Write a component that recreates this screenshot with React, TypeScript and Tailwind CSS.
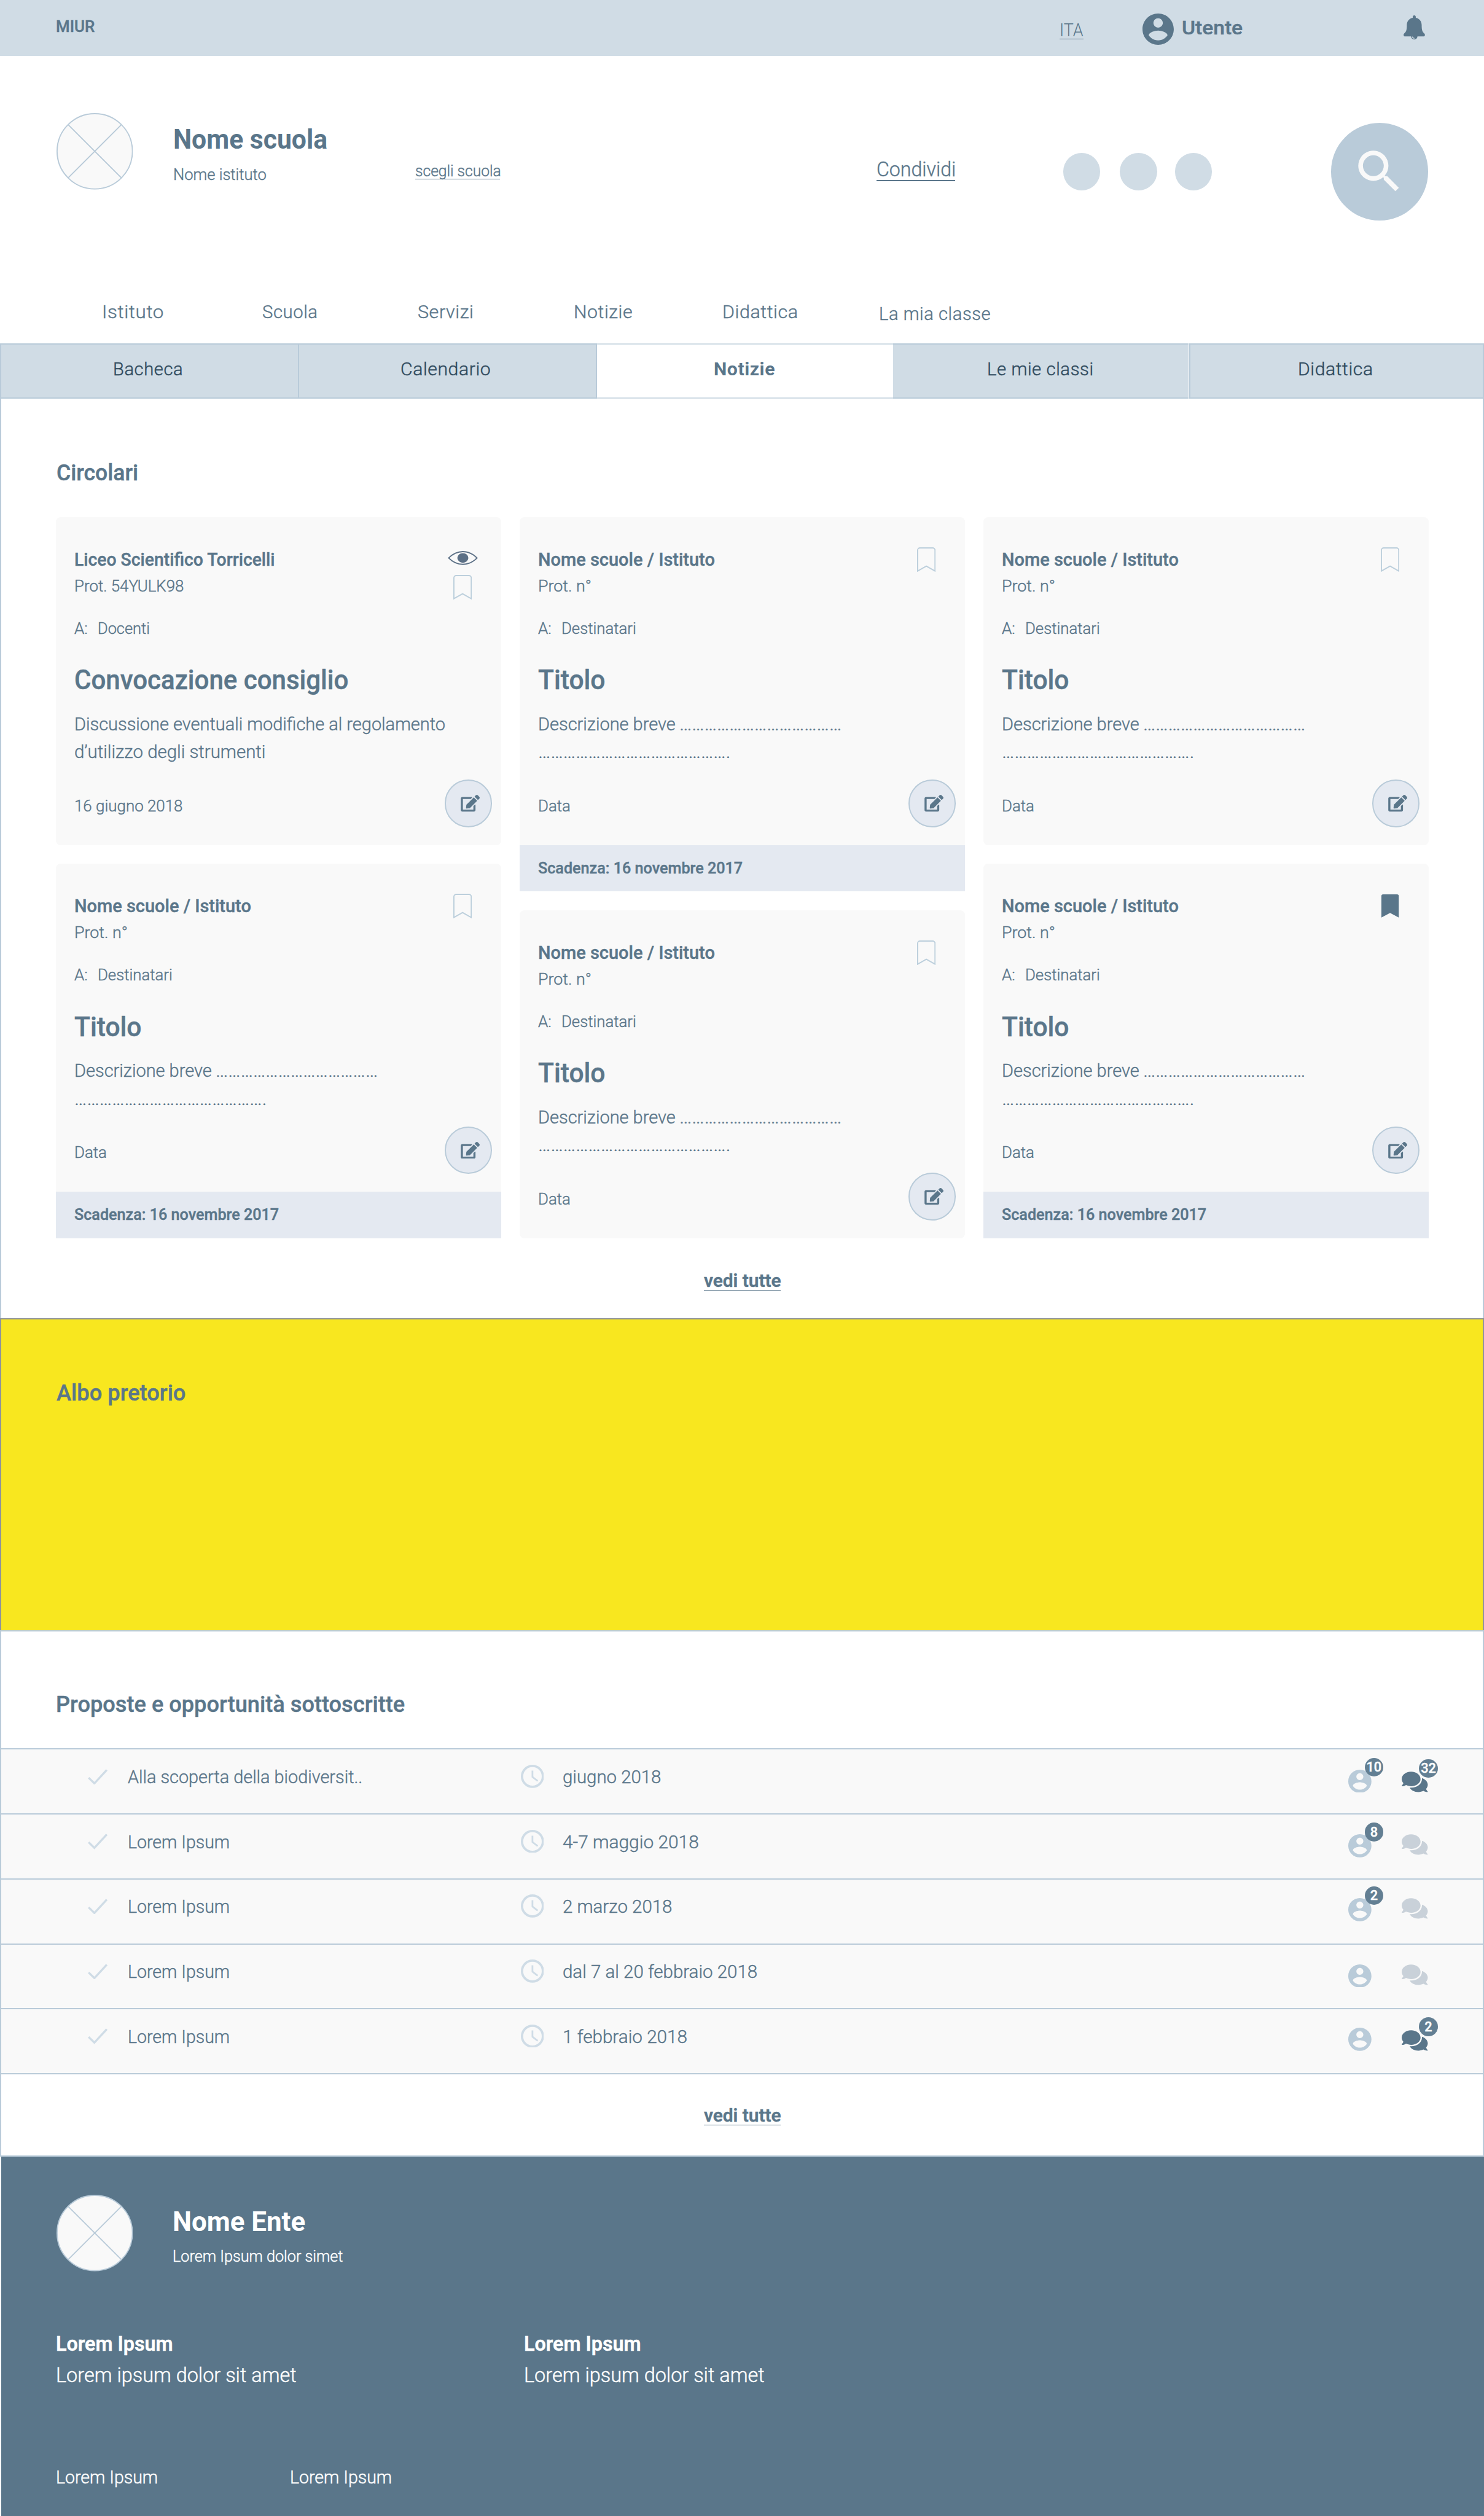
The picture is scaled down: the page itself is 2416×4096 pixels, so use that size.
import { useLayoutEffect, useRef, useState } from "react";
import type { ReactNode } from "react";
import { FaComments, FaEdit } from "react-icons/fa";

/** One line of text, condensed or widened to occupy `w` pixels. */
function Fit({ w, children, className = "" }: { w: number; children: ReactNode; className?: string }) {
  const outer = useRef<HTMLSpanElement>(null);
  const inner = useRef<HTMLSpanElement>(null);
  const [scale, setScale] = useState(1);
  useLayoutEffect(() => {
    if (!outer.current || !inner.current || scale !== 1) return;
    const target = outer.current.getBoundingClientRect().width;
    const natural = inner.current.getBoundingClientRect().width;
    if (natural > 0) setScale(target / natural);
  }, [scale]);
  return (
    <span ref={outer} className={`block whitespace-nowrap ${className}`} style={{ width: w }}>
      <span ref={inner} className="inline-block origin-left align-top" style={{ transform: `scaleX(${scale})` }}>
        {children}
      </span>
    </span>
  );
}

function Account({ className }: { className: string }) {
  return (
    <svg viewBox="2 2 20 20" className={className} fill="currentColor">
      <path d="M12 2C6.48 2 2 6.48 2 12s4.48 10 10 10 10-4.48 10-10S17.52 2 12 2zm0 3c1.66 0 3 1.34 3 3s-1.34 3-3 3-3-1.34-3-3 1.34-3 3-3zm0 14.2c-2.5 0-4.71-1.28-6-3.22.03-1.99 4-3.08 6-3.08 1.99 0 5.97 1.09 6 3.08-1.29 1.94-3.5 3.22-6 3.22z" />
    </svg>
  );
}

function Bell() {
  return (
    <svg viewBox="0 0 112 128" className="mt-[27px] h-[42px] w-[37px]">
      <path
        fill="#5a768a"
        d="M56 0c5 0 8 3 8 8v5c20 3 31 20 31 38 0 28 4 36 14 44 3 3 3 6 3 8 0 5-3 8-8 8H8c-5 0-8-3-8-8 0-2 0-5 3-8 10-8 14-16 14-44 0-18 11-35 31-38V8c0-5 3-8 8-8z"
      />
      <path fill="#5a768a" d="M39 110h34a17 17 0 0 1-34 0z" />
      <path fill="none" stroke="#d0dce5" strokeWidth="4" d="M46 112c1 5 5 9 11 9" />
    </svg>
  );
}

function Placeholder() {
  return (
    <svg viewBox="0 0 132 132" className="size-[132px]" fill="none" stroke="#b9cbd9" strokeWidth="2">
      <circle cx="66" cy="66" r="65" fill="#f9f9f9" />
      <path d="M20 20l92 92M112 20l-92 92" />
    </svg>
  );
}

function SearchGlyph() {
  return (
    <svg viewBox="0 0 24 24" className="size-24" fill="#f9f9f9">
      <path d="M15.5 14h-.79l-.28-.27C15.41 12.59 16 11.11 16 9.5 16 5.91 13.09 3 9.5 3S3 5.91 3 9.5 5.91 16 9.5 16c1.61 0 3.09-.59 4.23-1.57l.27.28v.79l5 4.99L20.49 19l-4.99-5zm-6 0C7.01 14 5 11.99 5 9.5S7.01 5 9.5 5 14 7.01 14 9.5 11.99 14 9.5 14z" />
    </svg>
  );
}

function Eye() {
  return (
    <svg viewBox="0 0 52 24" className="mb-[17px] ml-[5px] h-[24px] w-[52px]">
      <path d="M1.500 12C9 4.500 17 1 26 1s17 3.500 24.500 11C43 19.500 35 23 26 23S9 19.500 1.500 12z" fill="none" stroke="#5c7086" strokeWidth="2" />
      <ellipse cx="26" cy="12" rx="9.500" ry="8.300" fill="#5c7086" />
    </svg>
  );
}

function Bookmark({ filled }: { filled?: boolean }) {
  return filled ? (
    <svg viewBox="0 0 32 43" className="ml-[15px] h-[43px] w-[32px]">
      <path d="M4 1h24a3 3 0 0 1 3 3v37l-15-8L1 41V4a3 3 0 0 1 3-3z" fill="#5a768a" />
    </svg>
  ) : (
    <svg viewBox="0 0 32 43" className="ml-[15px] h-[43px] w-[32px]">
      <path d="M5 1h22a4 4 0 0 1 4 4v36l-15-8.500L1 41V5a4 4 0 0 1 4-4z" fill="none" stroke="#bccfdc" strokeWidth="2" />
    </svg>
  );
}

function Check() {
  return (
    <svg viewBox="0 0 34 27" className="mt-[33px] h-[27px] w-[34px]" fill="none" stroke="#cfdce6" strokeWidth="3.600">
      <path d="M1.300 15l10 9.700L32.700 1.500" />
    </svg>
  );
}

function Clock() {
  return (
    <svg viewBox="0 0 40 40" className="mt-[26px] size-[40px]" fill="none" stroke="#cfdce6">
      <circle cx="20" cy="20" r="18" strokeWidth="4" />
      <path d="M20 10v11l9 7" strokeWidth="3" />
    </svg>
  );
}

type CardData = {
  school: ReactNode;
  schoolW: number;
  prot: string;
  protW: number;
  to: string;
  toW: number;
  title: string;
  titleW: number;
  lines: [string, number][][];
  date: string;
  dateW: number;
  eye?: boolean;
  saved?: boolean;
  due?: boolean;
};

const generic: CardData = {
  school: "Nome scuole / Istituto",
  schoolW: 305,
  prot: "Prot. n°",
  protW: 92,
  to: "Destinatari",
  toW: 129,
  title: "Titolo",
  titleW: 116,
  lines: [
    [["Descrizione breve", 237], ["…………………………………", 280]],
    [["……………………………………….", 332]],
  ],
  date: "Data",
  dateW: 56,
};

const council: CardData = {
  school: "Liceo Scientifico Torricelli",
  schoolW: 346,
  prot: "Prot. 54YULK98",
  protW: 189,
  to: "Docenti",
  toW: 90,
  title: "Convocazione consiglio",
  titleW: 473,
  lines: [
    [["Discussione eventuali modifiche al regolamento", 640]],
    [["d’utilizzo degli strumenti", 330]],
  ],
  date: "16 giugno 2018",
  dateW: 187,
  eye: true,
};

function Card({ data }: { data: CardData }) {
  return (
    <article className="w-[768px]">
      <div className={`flex h-[566px] bg-[#f9f9f9] pl-[32px] ${data.due ? "rounded-t-lg" : "rounded-lg"}`}>
        <div className="w-[639px] pt-[54px]">
          <Fit w={data.schoolW} className="text-[31px] leading-[40px] font-medium">{data.school}</Fit>
          <Fit w={data.protW} className="mt-2 text-[27px] leading-[36px]">{data.prot}</Fit>
          <div className="mt-[37px] flex text-[27px] leading-[36px]">
            <div className="w-[40px]">
              <Fit w={23}>A:</Fit>
            </div>
            <Fit w={data.toW}>{data.to}</Fit>
          </div>
          <h3>
            <Fit w={data.titleW} className="mt-[43px] text-[47px] leading-[56px] font-medium">{data.title}</Fit>
          </h3>
          <div className="mt-[24px] text-[31px] leading-[48px]">
            {data.lines.map((line, i) => (
              <div key={i} className="flex gap-[7px]">
                {line.map(([text, w]) => (
                  <Fit key={text} w={w}>{text}</Fit>
                ))}
              </div>
            ))}
          </div>
          <Fit w={data.dateW} className="mt-[51px] text-[27px] leading-[36px]">{data.date}</Fit>
        </div>
        <div className={`flex flex-col pb-[31px] ${data.eye ? "pt-[59px]" : "pt-[52px]"}`}>
          {data.eye && <Eye />}
          <Bookmark filled={data.saved} />
          <button className="mt-auto flex size-[82px] items-center justify-center rounded-full border-[3px] border-[#b9cbd9] bg-[#e4e9f1] pl-[7px]">
            <FaEdit className="h-[29px] w-[33px]" />
          </button>
        </div>
      </div>
      {data.due && (
        <div className="h-20 bg-[#e4e9f1] pl-[32px]">
          <Fit w={353} className="text-[27px] leading-[79px] font-medium">Scadenza: 16 novembre 2017</Fit>
        </div>
      )}
    </article>
  );
}

function Badge({ children, className }: { children: ReactNode; className: string }) {
  return (
    <span className={`absolute flex size-8 items-center justify-center rounded-full bg-[#637f93] text-[23px] leading-none font-medium text-white ${className}`}>
      {children}
    </span>
  );
}

const rows = [
  { name: "Alla scoperta della biodiversit..", nameW: 405, date: "giugno 2018", dateW: 170, users: "10", chat: "32", ut: "mt-[34px]", ct: "mt-[38px]" },
  { name: "Lorem Ipsum", nameW: 176, date: "4-7 maggio 2018", dateW: 235, users: "8", chat: "", ut: "mt-[34px]", ct: "mt-[34px]" },
  { name: "Lorem Ipsum", nameW: 176, date: "2 marzo 2018", dateW: 189, users: "2", chat: "", ut: "mt-[32px]", ct: "mt-[32px]" },
  { name: "Lorem Ipsum", nameW: 176, date: "dal 7 al 20 febbraio 2018", dateW: 336, users: "", chat: "", ut: "mt-[34px]", ct: "mt-[34px]" },
  { name: "Lorem Ipsum", nameW: 176, date: "1 febbraio 2018", dateW: 215, users: "", chat: "2", ut: "mt-[32px]", ct: "mt-[36px]" },
];

const tabs = [
  { label: "Bacheca", w: 121, box: "w-[516px] border-l-[3px] border-r-[3px] pr-[5px]" },
  { label: "Calendario", w: 156, box: "w-[514px] border-r-[3px] pr-[6px]" },
  { label: "Notizie", w: 106, box: "w-[511px]" },
  { label: "Le mie classi", w: 184, box: "w-[509px] pr-px" },
  { label: "Didattica", w: 130, box: "w-[509px] ml-px border-x-[3px] pr-[3px]" },
];

function SeeAll({ className }: { className: string }) {
  return (
    <div className={`flex justify-center pl-px ${className}`}>
      <a className="border-b-[1.500px] border-[#5a768a]">
        <Fit w={133} className="text-[31px] leading-[32px] font-semibold">vedi tutte</Fit>
      </a>
    </div>
  );
}

export default function App() {
  return (
    <div className="h-[4340px] w-[2560px] overflow-hidden bg-white font-light text-[#5a768a] [font-family:Roboto,sans-serif] [-webkit-text-stroke:0.45px] [zoom:0.94377]">
      <div className="grid h-24 grid-cols-[1732px_137px_74px_382px_1fr] items-start bg-[#d0dce5] pl-24">
        <Fit w={67} className="mt-[26px] text-[27px] leading-[40px] font-medium">MIUR</Fit>
        <a className="mt-[37px] w-[41px] border-b-[1.500px] border-[#5a768a]">
          <Fit w={41} className="text-[31px] leading-[30px] [-webkit-text-stroke:0px]">ITA</Fit>
        </a>
        <div className="pt-[23px] pl-[6px]">
          <Account className="size-[54px]" />
        </div>
        <Fit w={105} className="mt-[29px] text-[33px] leading-[40px] font-medium">Utente</Fit>
        <Bell />
      </div>

      <header className="h-[496px] pt-[99px]">
        <div className="grid h-[323px] grid-cols-[202px_417px_796px_322px_462px_1fr] items-start pl-[97px]">
          <Placeholder />
          <div className="pt-[18px]">
            <h1>
              <Fit w={266} className="text-[47px] leading-[56px] font-bold [-webkit-text-stroke:0px]">Nome scuola</Fit>
            </h1>
            <Fit w={161} className="mt-[13px] text-[27px] leading-[40px]">Nome istituto</Fit>
          </div>
          <a className="mt-[87px] w-[147px] border-b-[1.500px] border-[#5a768a]">
            <Fit w={148} className="text-[27px] leading-[26px]">scegli scuola</Fit>
          </a>
          <a className="mt-[81px] w-[136px] border-b-[3px] border-[#5a768a]">
            <Fit w={137} className="text-[35px] leading-[34px]">Condividi</Fit>
          </a>
          <div className="mt-[69px] flex">
            <span className="mr-[34px] size-16 rounded-full bg-[#d0dce5]" />
            <span className="mr-[31px] size-16 rounded-full bg-[#d0dce5]" />
            <span className="size-16 rounded-full bg-[#d0dce5]" />
          </div>
          <button className="mt-[17px] flex size-[168px] items-center justify-center rounded-full bg-[#b9cbd9] pr-[2px]">
            <SearchGlyph />
          </button>
        </div>
        <nav className="grid grid-cols-[276px_269px_269px_256px_270px_1fr] pt-px pl-[176px] text-[31px] leading-[40px] tracking-[0.02em]">
          <Fit w={107}>Istituto</Fit>
          <Fit w={96}>Scuola</Fit>
          <Fit w={97}>Servizi</Fit>
          <Fit w={102}>Notizie</Fit>
          <Fit w={131}>Didattica</Fit>
          <Fit w={193} className="mt-[3px]">La mia classe</Fit>
        </nav>
      </header>

      <div className="flex h-24">
        {tabs.map((t) =>
          t.label === "Notizie" ? (
            <div key={t.label} className={`${t.box} flex justify-center border-y-[3px] border-[#d0dce5] bg-white pt-[24px] pr-[3px]`}>
              <Fit w={t.w} className="text-[31px] leading-[40px] font-bold tracking-[0.02em] [-webkit-text-stroke:0px]">{t.label}</Fit>
            </div>
          ) : (
            <div key={t.label} className={`${t.box} flex justify-center border-y-[3px] border-[#b9cbd9] bg-[#d0dce5] pt-[24px] text-[#2f4a5d]`}>
              <Fit w={t.w} className="text-[31px] leading-[40px] tracking-[0.02em]">{t.label}</Fit>
            </div>
          ),
        )}
      </div>

      <section className="h-[1586px] border-x-[3px] border-[#b9cbd9] pt-[103px]">
        <h2 className="pl-[95px]">
          <Fit w={141} className="text-[39px] leading-[48px] font-medium">Circolari</Fit>
        </h2>
        <div className="mt-[53px] flex gap-8 pl-[94px]">
          <div className="flex w-[768px] flex-col gap-8">
            <Card data={council} />
            <Card data={{ ...generic, due: true }} />
          </div>
          <div className="flex w-[768px] flex-col gap-8">
            <Card data={{ ...generic, due: true }} />
            <Card data={generic} />
          </div>
          <div className="flex w-[768px] flex-col gap-8">
            <Card data={generic} />
            <Card data={{ ...generic, saved: true, due: true }} />
          </div>
        </div>
        <SeeAll className="mt-[57px]" />
      </section>

      <section className="h-[538px] border-x-[3px] border-t-[3px] border-[#8f9399] bg-[#f8e71f] pt-[103px] pl-[95px]">
        <h2>
          <Fit w={223} className="text-[39px] leading-[48px] font-medium">Albo pretorio</Fit>
        </h2>
      </section>

      <section className="h-[906px] border-x-[3px] border-t-[3px] border-[#b9cbd9] pt-[102px]">
        <h2 className="pl-[94px]">
          <Fit w={602} className="text-[39px] leading-[48px] font-medium">Proposte e opportunità sottoscritte</Fit>
        </h2>
        <div className="mt-[52px] border-b-[3px] border-[#b9cbd9] bg-[#f9f9f9]">
          {rows.map((r) => (
            <div
              key={r.date}
              className="grid h-[112px] grid-cols-[69px_678px_72px_1356px_92px_1fr] items-start border-t-[3px] border-[#b9cbd9] pl-[149px] text-[31px] leading-[40px]"
            >
              <Check />
              <Fit w={r.nameW} className="mt-[28px]">{r.name}</Fit>
              <Clock />
              <Fit w={r.dateW} className="mt-[28px]">{r.date}</Fit>
              <div className={`relative size-10 text-[#b9cbd9] ${r.ut}`}>
                <Account className="size-10" />
                {r.users && <Badge className="-top-5 left-7">{r.users}</Badge>}
              </div>
              <div className={`relative h-9 w-[45px] ${r.ct} ${r.chat ? "text-[#5a768a]" : "text-[#c9d1d9]"}`}>
                <FaComments className="-mt-[2px] h-[40px] w-[45px]" />
                {r.chat && <Badge className="-top-[22px] left-[30px]">{r.chat}</Badge>}
              </div>
            </div>
          ))}
        </div>
        <SeeAll className="mt-[55px]" />
      </section>

      <footer className="h-[622px] border-t-[3px] border-t-[#b9cbd9] bg-white pl-[2px] text-white">
        <div className="h-full bg-[#5a768a] pt-[66px] pl-[94px]">
          <div className="flex pl-px">
            <Placeholder />
            <div className="pt-[19px] pl-[69px]">
              <Fit w={229} className="text-[47px] leading-[56px] font-bold [-webkit-text-stroke:0px]">Nome Ente</Fit>
              <Fit w={294} className="mt-3 text-[27px] leading-[40px]">Lorem Ipsum dolor simet</Fit>
            </div>
          </div>
          <div className="mt-[101px] grid grid-cols-[808px_1fr] text-[35px] leading-[48px]">
            <div>
              <Fit w={202} className="font-semibold">Lorem Ipsum</Fit>
              <Fit w={415} className="mt-[6px]">Lorem ipsum dolor sit amet</Fit>
            </div>
            <div>
              <Fit w={202} className="font-semibold">Lorem Ipsum</Fit>
              <Fit w={415} className="mt-[6px]">Lorem ipsum dolor sit amet</Fit>
            </div>
          </div>
          <div className="mt-[133px] grid grid-cols-[404px_1fr] text-[31px] leading-[40px]">
            <Fit w={176}>Lorem Ipsum</Fit>
            <Fit w={176}>Lorem Ipsum</Fit>
          </div>
        </div>
      </footer>
    </div>
  );
}
